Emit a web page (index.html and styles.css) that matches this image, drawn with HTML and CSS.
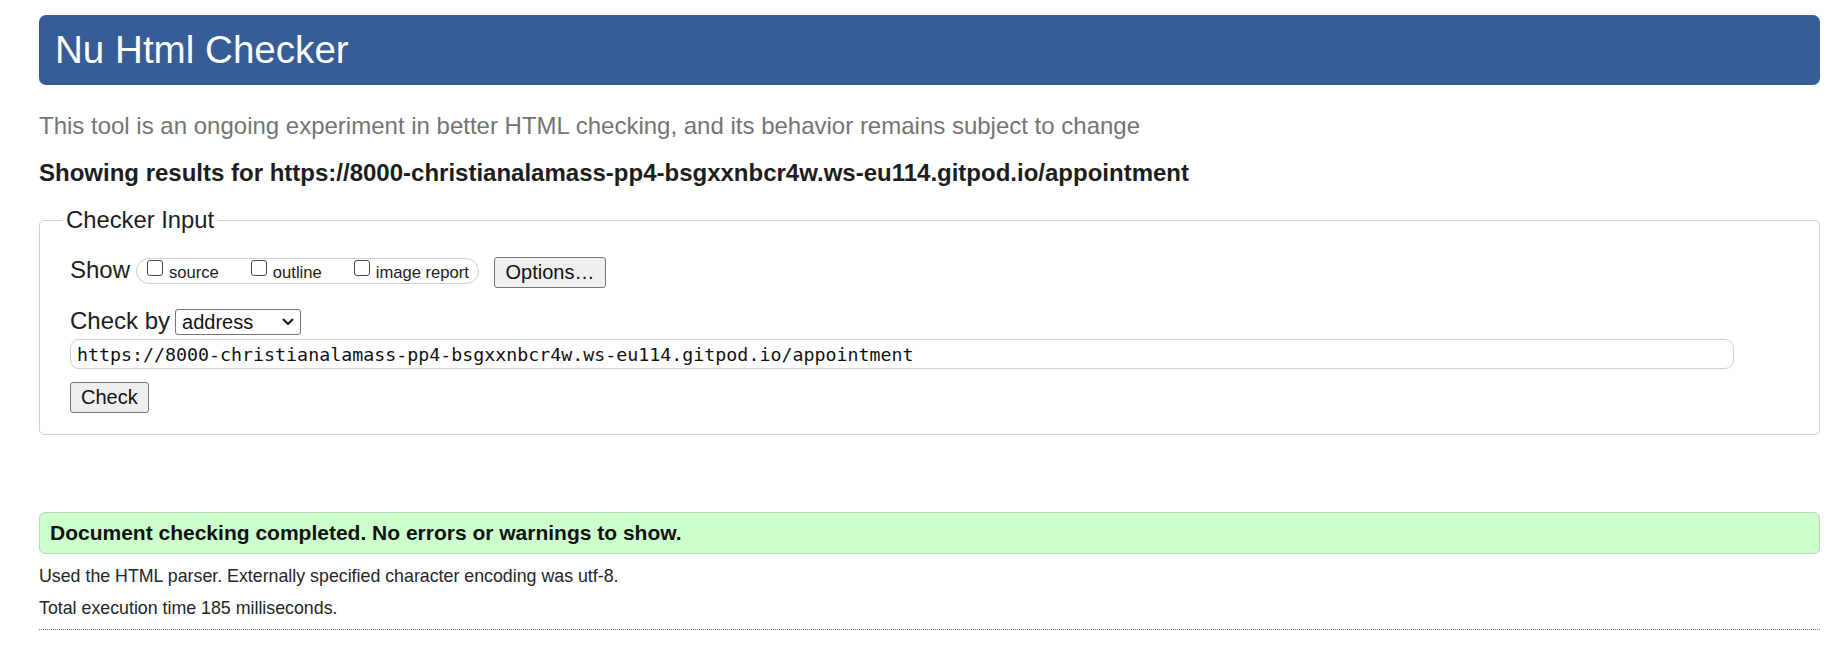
FILE: index.html
```html
<!DOCTYPE html>
<html lang="en">
<head>
<meta charset="utf-8">
<title>Showing results for https://8000-christianalamass-pp4-bsgxxnbcr4w.ws-eu114.gitpod.io/appointment - Nu Html Checker</title>
<link rel="stylesheet" href="styles.css">
</head>
<body>
<h1 class="title">Nu Html Checker</h1>
<p class="about">This tool is an ongoing experiment in better HTML checking, and its behavior remains subject to change</p>
<h2 class="results-for">Showing results for https://8000-christianalamass-pp4-bsgxxnbcr4w.ws-eu114.gitpod.io/appointment</h2>
<form class="checker-form">
  <fieldset class="checker">
    <legend class="checker-legend">Checker Input</legend>
    <div class="rows">
      <div class="row show-row">
        <span class="row-label">Show</span>
        <div class="pill">
          <label class="opt"><input type="checkbox" class="cb"><span class="opt-text">source</span></label>
          <label class="opt"><input type="checkbox" class="cb"><span class="opt-text">outline</span></label>
          <label class="opt"><input type="checkbox" class="cb"><span class="opt-text">image report</span></label>
        </div>
        <button type="button" class="btn options-btn">Options…</button>
      </div>
      <div class="row checkby-row">
        <label class="row-label" for="docselect">Check by</label>
        <span class="select-wrap">
          <select id="docselect" class="select"><option>address</option><option>file upload</option><option>text input</option></select>
          <svg class="chevron" width="12" height="8" viewBox="0 0 12 8" aria-hidden="true"><path d="M1.5 1.5 L6 6 L10.5 1.5" fill="none" stroke="#111" stroke-width="1.8" stroke-linecap="round" stroke-linejoin="round"/></svg>
        </span>
      </div>
      <input class="url" type="url" value="https://8000-christianalamass-pp4-bsgxxnbcr4w.ws-eu114.gitpod.io/appointment">
      <button type="button" class="btn check-btn">Check</button>
    </div>
  </fieldset>
</form>
<div class="success">Document checking completed. No errors or warnings to show.</div>
<p class="details">Used the HTML parser. Externally specified character encoding was utf-8.</p>
<p class="details">Total execution time 185 milliseconds.</p>
<hr class="dotted">
</body>
</html>
```
FILE: styles.css
```css
html, body {
  background: #fff;
}
body {
  margin: 0;
  padding: 15px 25px 0 39px;
  font-family: "Liberation Sans", Arial, sans-serif;
  color: #1d1d1d;
}
.title {
  margin: 0;
  height: 70px;
  line-height: 70px;
  padding: 0 0 0 16px;
  background: #365d95;
  color: #fff;
  font-size: 38.6px;
  font-weight: normal;
  border-radius: 7px;
}
.about {
  margin: 28px 0 0;
  font-size: 24px;
  line-height: 26px;
  color: #747474;
}
.results-for {
  margin: 21px 0 0;
  font-size: 24px;
  line-height: 26px;
  font-weight: bold;
  color: #1d1d1d;
}
.checker-form {
  margin: 21px 0 0;
}
.checker {
  margin: 0;
  padding: 24px 85px 21px 22px;
  border: 1px solid #cfcfcf;
  border-radius: 5px;
  min-width: 0;
}
.checker-legend {
  padding: 0 4px;
  font-size: 23.8px;
  line-height: 26px;
  color: #1d1d1d;
}
.rows {
  display: flex;
  flex-direction: column;
  align-items: flex-start;
  padding-left: 8px;
}
.row {
  display: flex;
  align-items: flex-start;
}
.row-label {
  font-size: 24px;
  line-height: 26px;
  color: #1d1d1d;
}
.pill {
  display: flex;
  align-items: flex-start;
  gap: 32px;
  height: 24px;
  margin: 1px 0 0 6px;
  padding: 0 9px 0 10px;
  border: 1px solid #cfcfcf;
  border-radius: 13px;
}
.opt {
  display: flex;
  align-items: flex-start;
  gap: 6px;
  font-size: 16.6px;
  line-height: 24px;
  color: #1d1d1d;
}
.opt-text {
  margin-top: 2px;
}
.cb {
  appearance: none;
  -webkit-appearance: none;
  width: 16px;
  height: 16px;
  margin: 1px 0 0;
  border: 1px solid #4a4a4a;
  border-radius: 3px;
  background: #fff;
}
.btn {
  font-family: "Liberation Sans", Arial, sans-serif;
  font-size: 20px;
  color: #111;
  background: #efefef;
  border: 1px solid #767676;
  border-radius: 3px;
  height: 31px;
  padding: 0 10px;
  line-height: 29px;
}
.options-btn {
  margin-left: 15px;
  width: 112px;
  padding: 0;
}
.checkby-row {
  margin-top: 20px;
}
.select-wrap {
  position: relative;
  display: inline-flex;
  margin: 1px 0 0 5px;
}
.select {
  appearance: none;
  -webkit-appearance: none;
  width: 126px;
  height: 26px;
  padding: 0 0 0 6px;
  border: 1px solid #767676;
  border-radius: 3px;
  background: #fff;
  font-family: "Liberation Sans", Arial, sans-serif;
  font-size: 20px;
  color: #111;
}
.chevron {
  position: absolute;
  right: 7px;
  top: 9px;
  pointer-events: none;
}
.url {
  box-sizing: border-box;
  width: 100%;
  height: 30px;
  margin: 4px 0 0;
  padding: 0 6px;
  border: 1px solid #cfcfcf;
  border-radius: 9px;
  font-family: "DejaVu Sans Mono", "Liberation Mono", monospace;
  font-size: 18.3px;
  color: #111;
  background: #fff;
}
.check-btn {
  margin-top: 13px;
}
.success {
  margin: 77px 0 0;
  height: 40px;
  line-height: 40px;
  padding: 0 0 0 10px;
  background: #ccffcc;
  border: 1px solid #bcd6bc;
  border-radius: 6px;
  font-size: 21px;
  font-weight: bold;
  color: #111;
}
.details {
  margin: 0;
  font-size: 17.8px;
  line-height: 31.5px;
  color: #262626;
}
.success + .details {
  margin-top: 7px;
}
.dotted {
  margin: 5px 0 0;
  height: 0;
  border: 0;
  border-top: 1px dotted #777;
}
```
